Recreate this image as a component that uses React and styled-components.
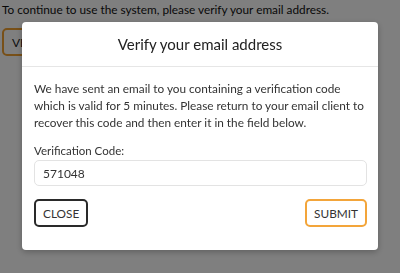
import styled, { createGlobalStyle } from 'styled-components';

const GlobalStyle = createGlobalStyle`
  body {
    margin: 0;
    background: #ffffff;
    font-family: Lato, "Liberation Sans", sans-serif;
    color: #222;
  }
`;

export default function App() {
  return (
    <>
      <GlobalStyle />
      <Page>
        <Notice>To continue to use the system, please verify your email address.</Notice>
        <PageButton>VERIFY EMAIL</PageButton>
      </Page>

      <Overlay>
        <Dialog>
          <DialogHeader>Verify your email address</DialogHeader>
          <DialogBody>
            <Message>
              We have sent an email to you containing a verification code which is valid for 5
              minutes. Please return to your email client to recover this code and then enter it
              in the field below.
            </Message>
            <Label htmlFor="code">Verification Code:</Label>
            <CodeInput id="code" defaultValue="571048" />
            <Actions>
              <ActionButton $tone="dark">CLOSE</ActionButton>
              <ActionButton $tone="orange">SUBMIT</ActionButton>
            </Actions>
          </DialogBody>
        </Dialog>
      </Overlay>
    </>
  );
}

const Page = styled.div`
  padding: 2px 2px;
  height: 273px;
  box-sizing: border-box;
`;

const Notice = styled.p`
  margin: 0 0 10px;
  font-size: 11.8px;
  line-height: 16px;
  color: #111;
`;

const PageButton = styled.button`
  background: #fff;
  border: 2px solid #f0a030;
  border-radius: 5px;
  padding: 0 8px;
  height: 28px;
  font-family: inherit;
  font-size: 12px;
  color: #222;
`;

const Overlay = styled.div`
  position: fixed;
  inset: 0;
  background: rgba(0, 0, 0, 0.5);
  display: flex;
  justify-content: center;
  align-items: flex-start;
  padding-top: 22px;
`;

const Dialog = styled.div`
  width: 356px;
  background: #fff;
  border-radius: 4px;
  box-shadow: 0 2px 6px rgba(0, 0, 0, 0.25);
`;

const DialogHeader = styled.div`
  height: 44px;
  display: flex;
  align-items: center;
  justify-content: center;
  border-bottom: 1px solid #e6e6e6;
  font-size: 15px;
  color: #222;
`;

const DialogBody = styled.div`
  padding: 13px 11px 23px 12px;
`;

const Message = styled.p`
  margin: 0 0 12px;
  font-size: 11.8px;
  line-height: 17px;
  color: #333;
`;

const Label = styled.label`
  display: block;
  font-size: 11.5px;
  line-height: 16px;
  color: #333;
  margin-bottom: 1px;
`;

const CodeInput = styled.input`
  display: block;
  width: 100%;
  box-sizing: border-box;
  height: 26px;
  padding: 0 8px;
  border: 1px solid #e3e3e3;
  border-radius: 5px;
  font-family: inherit;
  font-size: 12px;
  color: #333;
  outline: none;
`;

const Actions = styled.div`
  display: flex;
  justify-content: space-between;
  margin-top: 13px;
`;

const ActionButton = styled.button`
  height: 28px;
  padding: 0 7px;
  background: #fff;
  border: 2px solid ${({ $tone }) => ($tone === 'orange' ? '#f3a53a' : '#2a2a2a')};
  border-radius: 5px;
  font-family: inherit;
  font-size: 11.8px;
  color: #333;
`;
